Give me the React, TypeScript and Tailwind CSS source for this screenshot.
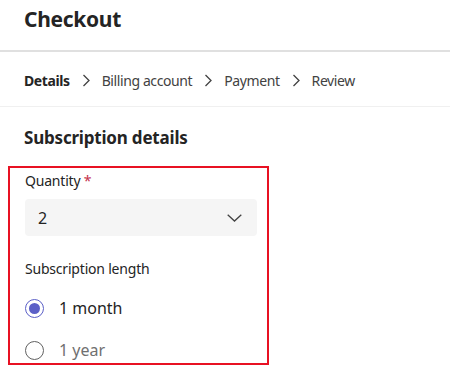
const steps = ["Billing account", "Payment", "Review"];

function Chevron() {
  return (
    <svg width="8" height="13" viewBox="0 0 8 13" fill="none" className="shrink-0">
      <path d="M1.5 1 L7 6.5 L1.5 12" stroke="#424242" strokeWidth="1.3" />
    </svg>
  );
}

export default function App() {
  return (
    <div
      className="w-[450px] h-[368px] overflow-hidden bg-white text-[#242424]"
      style={{ fontFamily: '"Noto Sans", "Open Sans", sans-serif' }}
    >
      {/* header */}
      <div className="h-[50px] px-6 pt-[5px]">
        <h1 className="text-[21px] leading-[28px] font-bold tracking-[-0.3px]">Checkout</h1>
      </div>
      <div className="h-[2px] bg-[#e0e0e0]" />

      {/* breadcrumb */}
      <div className="h-[54px] px-6 pt-[2px] flex items-center gap-[12px] text-[14px] tracking-[-0.4px]">
        <span className="font-bold">Details</span>
        {steps.map((s) => (
          <div key={s} className="flex items-center gap-[12px]">
            <Chevron />
            <span className="text-[#424242]">{s}</span>
          </div>
        ))}
      </div>
      <div className="h-px bg-[#f0f0f0]" />

      <div className="px-6 pt-[19px]">
        <h2 className="text-[17px] leading-[24px] font-bold tracking-[-0.2px]">Subscription details</h2>
      </div>

      {/* form */}
      <div className="ml-2 mt-[16px] w-[261px] h-[199px] border-2 border-[#e81123] px-[15px] pt-[3px]">
        <div className="text-[14px] leading-[20px] tracking-[-0.2px] text-[#242424]">
          Quantity <span className="text-[#c4314b]">*</span>
        </div>
        <div className="mt-[8px] h-[37px] w-[232px] rounded-[4px] bg-[#f5f5f5] flex items-center justify-between pl-[13px] pr-[15px]">
          <span className="text-[16px]">2</span>
          <svg width="15" height="8" viewBox="0 0 15 8" fill="none">
            <path d="M0.7 0.7 L7.5 7 L14.3 0.7" stroke="#424242" strokeWidth="1.3" />
          </svg>
        </div>

        <div className="mt-[23px] text-[14px] leading-[20px] tracking-[-0.2px]">Subscription length</div>

        <div className="mt-[19px] flex items-center gap-[15px] h-[20px]">
          <div className="w-[19px] h-[19px] rounded-full border-[1.5px] border-[#5b5fc7] flex items-center justify-center">
            <div className="w-[11px] h-[11px] rounded-full bg-[#5b5fc7]" />
          </div>
          <span className="text-[16px] text-[#242424]">1 month</span>
        </div>

        <div className="mt-[22px] flex items-center gap-[15px] h-[20px]">
          <div className="w-[19px] h-[19px] rounded-full border-[1.5px] border-[#616161]" />
          <span className="text-[16px] text-[#707070]">1 year</span>
        </div>
      </div>
    </div>
  );
}
